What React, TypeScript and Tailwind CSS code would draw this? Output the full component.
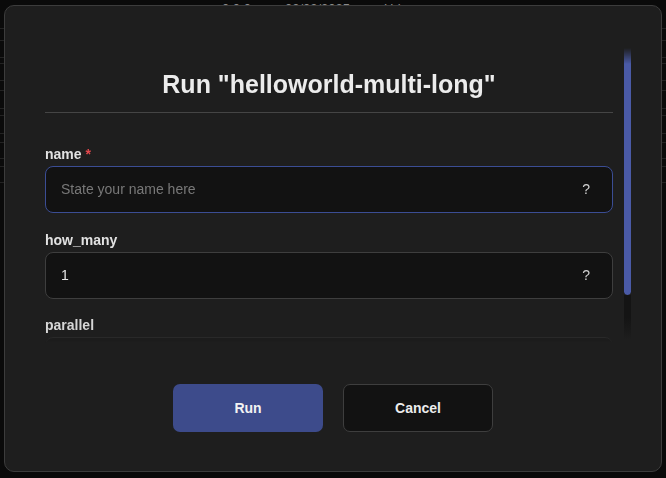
export default function App() {
  const rows = [28, 40, 57, 63, 80, 90, 108, 115, 133, 142, 158, 166, 182];

  return (
    <div className="relative h-[478px] w-[666px] overflow-hidden bg-[#0a0a0a] font-['Liberation_Sans',Arial,sans-serif]">
      {/* page behind the dialog */}
      <div className="absolute inset-0">
        <div className="flex gap-[34px] pl-[222px] pt-[1px] text-[13px] leading-4 text-[#8a8a8a]">
          <span>0.0.0</span>
          <span>03/03/2025</span>
          <span>Url</span>
        </div>
        {rows.map((y) => (
          <div
            key={y}
            className="absolute left-0 right-0 h-px bg-[#222]"
            style={{ top: y }}
          />
        ))}
      </div>

      {/* dialog */}
      <div className="absolute inset-0 px-[4px] pt-[5px] pb-[6px]">
        <div className="flex h-full flex-col rounded-[10px] border border-[#3c3c3c] bg-[#1e1e1e]">
          <div className="mt-[39px] flex h-[298px] pl-[40px] pr-[30px]">
            <div className="w-[568px] overflow-hidden [mask-image:linear-gradient(to_bottom,black_calc(100%-8px),transparent)]">
              <h2 className="mt-[23px] text-center text-[25px] font-bold leading-8 text-[#ececec]">
                Run "helloworld-multi-long"
              </h2>
              <div className="mt-3 h-px bg-[#454545]" />

              <div className="mt-[31px]">
                <label className="block text-[14px] font-bold leading-5 text-[#e2e2e2]">
                  name <span className="text-[#e5484d]">*</span>
                </label>
                <div className="mt-0.5 flex h-[47px] items-center justify-between rounded-[8px] border border-[#3b4d94] bg-[#121212] pl-[15px] pr-[22px] text-[14px]">
                  <span className="text-[#787878]">State your name here</span>
                  <span className="text-[#cfcfcf]">?</span>
                </div>
              </div>

              <div className="mt-[17px]">
                <label className="block text-[14px] font-bold leading-5 text-[#e2e2e2]">
                  how_many
                </label>
                <div className="mt-0.5 flex h-[47px] items-center justify-between rounded-[8px] border border-[#3e3e3e] bg-[#121212] pl-[15px] pr-[22px] text-[14px]">
                  <span className="text-[#e6e6e6]">1</span>
                  <span className="text-[#cfcfcf]">?</span>
                </div>
              </div>

              <div className="mt-[16px]">
                <label className="block text-[14px] font-bold leading-5 text-[#d6d6d6]">
                  parallel
                </label>
                <div className="mt-0.5 h-[47px] rounded-[8px] border border-[#2e2e2e] bg-[#1b1b1b]" />
              </div>
            </div>

            {/* scrollbar */}
            <div className="ml-[11px] flex w-[7px] flex-col pt-[3px]">
              <div className="h-[247px] rounded-b-full bg-[#4a5aa6] [mask-image:linear-gradient(to_bottom,transparent,black_16px)]" />
              <div className="h-[45px] bg-[linear-gradient(to_bottom,#141414,#141414_50%,transparent)]" />
            </div>
          </div>

          <div className="mt-[41px] flex justify-center gap-5">
            <button className="h-[48px] w-[150px] rounded-[7px] bg-[#3d4b8b] text-[14px] font-bold text-[#f2f2f2]">
              Run
            </button>
            <button className="h-[48px] w-[150px] rounded-[7px] border border-[#3e3e3e] bg-[#121212] text-[14px] font-bold text-[#ececec]">
              Cancel
            </button>
          </div>
        </div>
      </div>
    </div>
  );
}
